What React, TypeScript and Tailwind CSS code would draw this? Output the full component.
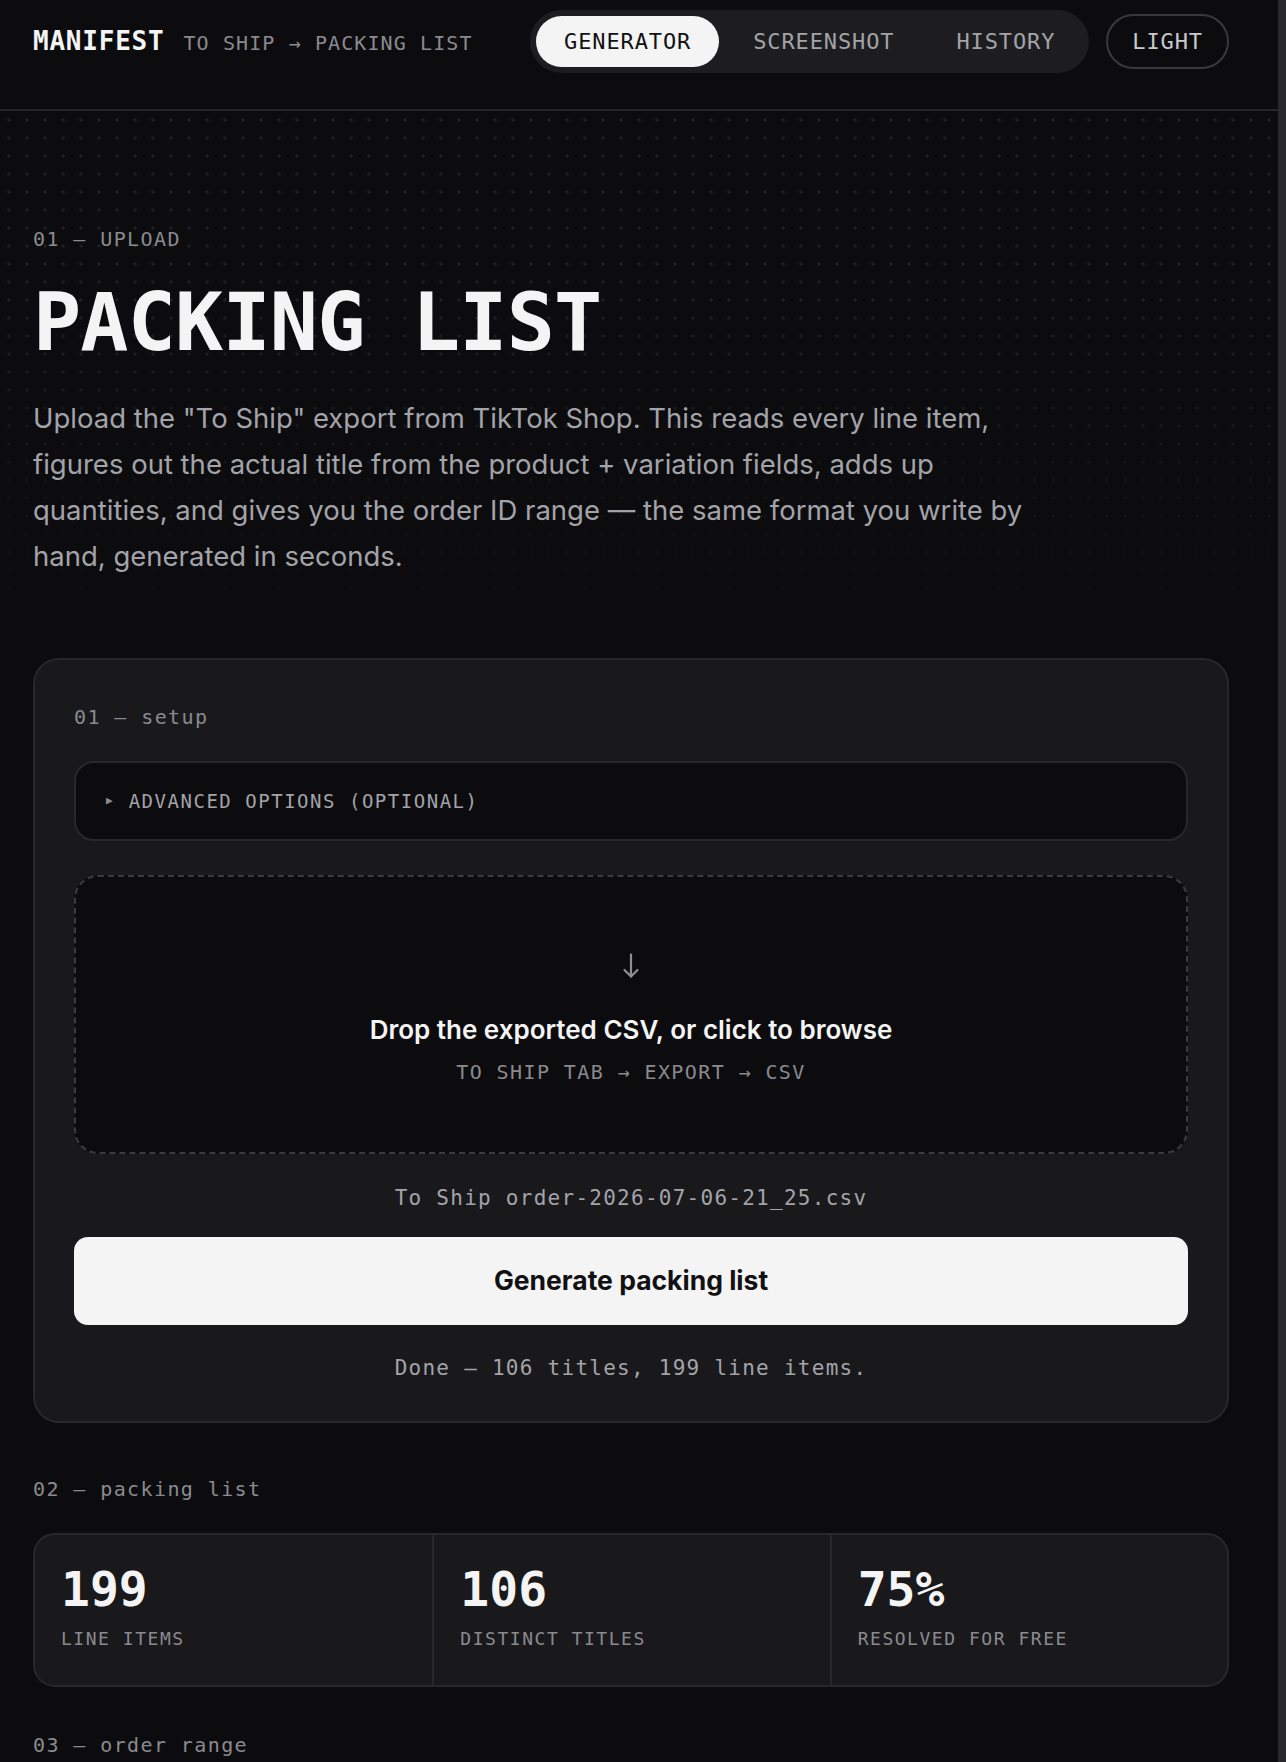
const mono = "font-['DejaVu_Sans_Mono',monospace]";
const sans = "font-['Inter','Noto_Sans',sans-serif]";

const tabs = ['GENERATOR', 'SCREENSHOT', 'HISTORY'];

const stats = [
  { value: '199', label: 'LINE ITEMS' },
  { value: '106', label: 'DISTINCT TITLES' },
  { value: '75%', label: 'RESOLVED FOR FREE' },
];

const Header = () => (
  <header className="border-b-2 border-[#25252a]">
    <div className="flex h-[109px] items-start justify-between pl-[33px] pr-[49px] pt-[10px]">
      <div className="flex h-[63px] items-center">
        <div className="flex items-baseline gap-[19px]">
          <span className={`${mono} text-[26px] font-bold tracking-[0.03em] text-[#f4f4f5]`}>MANIFEST</span>
          <span className={`${mono} text-[20px] tracking-[0.055em] text-[#8a8a90]`}>TO SHIP → PACKING LIST</span>
        </div>
      </div>

      <div className="flex h-[63px] items-center gap-[17px]">
        <nav className="flex items-center gap-[6px] rounded-full bg-[#1d1d20] p-[6px]">
          {tabs.map((tab, i) => (
            <button
              key={tab}
              className={
                i === 0
                  ? `${mono} h-[51px] rounded-full bg-[#f4f4f4] px-7 text-[22px] tracking-[0.04em] text-[#111113]`
                  : `${mono} h-[51px] rounded-full px-7 text-[22px] tracking-[0.04em] text-[#a3a3aa]`
              }
            >
              {tab}
            </button>
          ))}
        </nav>
        <button
          className={`${mono} h-[55px] rounded-full border-2 border-[#38383e] px-[24px] text-[22px] tracking-[0.04em] text-[#c9c9ce]`}
        >
          LIGHT
        </button>
      </div>
    </div>
  </header>
);

const Hero = () => (
  <section className="bg-[linear-gradient(to_bottom,rgba(12,12,14,0)_35%,#0c0c0e_92%),radial-gradient(circle,#1f1f23_1.5px,transparent_1.7px)] [background-size:100%_100%,18px_18px] pb-[79px] pl-[33px] pr-[49px] pt-[114px]">
    <p className={`${mono} text-[20px] leading-[28px] tracking-[0.07em] text-[#8a8a90]`}>01 — UPLOAD</p>
    <h1 className={`${mono} mt-[30px] text-[80px] font-bold leading-[80px] tracking-[-0.01em] text-[#f4f4f5]`}>
      PACKING LIST
    </h1>
    <p className={`${sans} mt-[32px] max-w-[1030px] text-[27.5px] leading-[46px] text-[#a3a3aa]`}>
      Upload the "To Ship" export from TikTok Shop. This reads every line item, figures out the actual title from the
      product + variation fields, adds up quantities, and gives you the order ID range — the same format you write by
      hand, generated in seconds.
    </p>
  </section>
);

const DownArrow = () => (
  <svg width="18" height="26" viewBox="0 0 18 26" fill="none" stroke="#8e8e95" strokeWidth="2.2" strokeLinecap="round" strokeLinejoin="round">
    <path d="M9 1.5v22" />
    <path d="M2.5 17l6.5 6.5 6.5-6.5" />
  </svg>
);

const SetupCard = () => (
  <div className="rounded-[26px] border-2 border-[#27272c] bg-[#19191c] px-[39px] pb-[39px] pt-[43px]">
    <p className={`${mono} text-[20px] leading-[28px] tracking-[0.07em] text-[#8a8a90]`}>01 — setup</p>

    <div className="mt-[30px] flex h-[80px] items-center gap-[16px] rounded-[20px] border-2 border-[#27272c] bg-[#0c0c0e] pl-[30px]">
      <span className={`${mono} text-[11px] text-[#8a8a90]`}>▶</span>
      <span className={`${mono} text-[19px] tracking-[0.08em] text-[#a3a3aa]`}>ADVANCED OPTIONS (OPTIONAL)</span>
    </div>

    <div className="mt-[34px] flex h-[279px] flex-col items-center rounded-[24px] border-2 border-dashed border-[#3a3a40] bg-[#0c0c0e] pt-[76px]">
      <DownArrow />
      <p className={`${sans} mt-[35px] text-[26px] font-semibold leading-[32px] text-[#f4f4f5]`}>
        Drop the exported CSV, or click to browse
      </p>
      <p className={`${mono} mt-[12px] text-[20px] leading-[28px] tracking-[0.07em] text-[#8a8a90]`}>
        TO SHIP TAB → EXPORT → CSV
      </p>
    </div>

    <p className={`${mono} mt-[30px] text-center text-[21px] leading-[28px] tracking-[0.06em] text-[#a3a3aa]`}>
      To Ship order-2026-07-06-21_25.csv
    </p>

    <button className={`${sans} mt-[25px] flex h-[88px] w-full items-center justify-center rounded-[14px] bg-[#f4f4f4] text-[26.5px] font-bold text-[#111113]`}>
      Generate packing list
    </button>

    <p className={`${mono} mt-[29px] text-center text-[21px] leading-[28px] tracking-[0.06em] text-[#a3a3aa]`}>
      Done — 106 titles, 199 line items.
    </p>
  </div>
);

const StatsCard = () => (
  <div className="grid grid-cols-3 overflow-hidden rounded-[22px] border-2 border-[#27272c] bg-[#19191c]">
    {stats.map((stat, i) => (
      <div
        key={stat.label}
        className={i === 0 ? 'h-[150px] px-[26px] pt-[30px]' : 'h-[150px] border-l-2 border-[#27272c] px-[26px] pt-[30px]'}
      >
        <p className={`${mono} text-[48px] font-bold leading-[48px] text-[#f4f4f5]`}>{stat.value}</p>
        <p className={`${mono} mt-[14px] text-[18px] leading-[24px] tracking-[0.085em] text-[#8a8a90]`}>{stat.label}</p>
      </div>
    ))}
  </div>
);

export default function App() {
  return (
    <div className="flex h-[1762px] overflow-hidden bg-[#0c0c0e]">
      <div className="min-w-0 flex-1">
        <Header />
        <Hero />

        <div className="pl-[33px] pr-[49px]">
          <SetupCard />

          <p className={`${mono} mt-[52px] text-[20px] leading-[28px] tracking-[0.07em] text-[#8a8a90]`}>
            02 — packing list
          </p>
          <div className="mt-[30px]">
            <StatsCard />
          </div>

          <p className={`${mono} mt-[44px] text-[20px] leading-[28px] tracking-[0.07em] text-[#8a8a90]`}>
            03 — order range
          </p>
        </div>
      </div>
      <div className="w-2 shrink-0 bg-[#29292c]" />
    </div>
  );
}
